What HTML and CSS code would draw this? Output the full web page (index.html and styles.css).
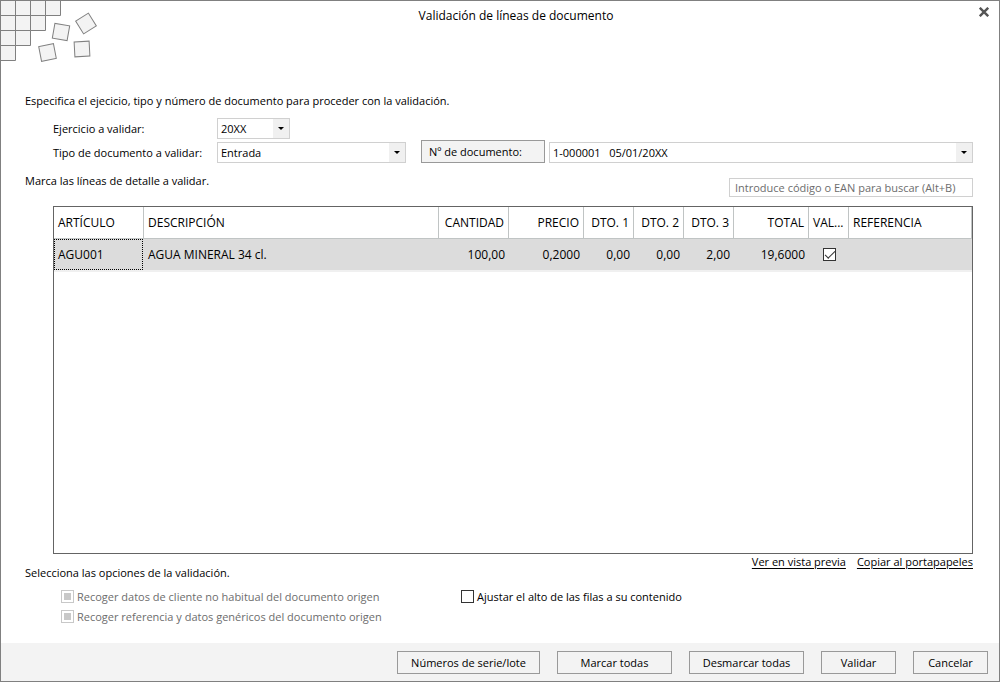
FILE: index.html
```html
<!DOCTYPE html>
<html lang="es">
<head>
<meta charset="utf-8">
<meta name="viewport" content="width=device-width, initial-scale=1">
<title>Validación de líneas de documento</title>
<link rel="stylesheet" href="styles.css">
</head>
<body>
<main class="dialog">
  <header class="titlebar">
    <svg class="mosaic" width="98" height="64" viewBox="0 0 98 64" aria-hidden="true">
      <g fill="#f3f3f3" stroke="#808080">
        <path d="M-.5-.5h60v15h-15v15h-15v15h-15v15h-15z"/>
        <path d="M14.500-.5v45M29.500-.5v30M44.500-.5v15M-.5 14.500h45M-.5 29.500h30M-.5 44.500h15"/>
        <rect x="-7.500" y="-7.500" width="15" height="15" transform="translate(60 31) rotate(10)"/>
        <rect x="-7.500" y="-7.500" width="15" height="15" transform="translate(85 22.500) rotate(-32)"/>
        <rect x="-7.500" y="-7.500" width="15" height="15" transform="translate(46.500 51.500) rotate(-11)"/>
        <rect x="-7.500" y="-7.500" width="15" height="15" transform="translate(81 48) rotate(-3)"/>
      </g>
    </svg>
    <h1 class="title">Validación de líneas de documento</h1>
    <button class="close" type="button" aria-label="Cerrar">
      <svg width="10" height="10" viewBox="0 0 10 10" aria-hidden="true"><path d="M.8 .8l8.400 8.400M9.200 .8l-8.400 8.400" stroke="#555" stroke-width="2.400" fill="none"/></svg>
    </button>
  </header>

  <section class="content">
    <p class="text">Especifica el ejecicio, tipo y número de documento para proceder con la validación.</p>
    <div class="fields">
      <div class="field">
        <label class="field-label" for="ejercicio">Ejercicio a validar:</label>
        <span class="combo combo-year"><select id="ejercicio"><option>20XX</option></select></span>
      </div>
      <div class="field">
        <label class="field-label" for="tipo">Tipo de documento a validar:</label>
        <span class="combo combo-type"><select id="tipo"><option>Entrada</option></select></span>
        <button class="button doc-button" type="button">Nº de documento:</button>
        <span class="combo combo-doc"><select aria-label="Nº de documento"><option>1-000001&nbsp;&nbsp; 05/01/20XX</option></select></span>
      </div>
    </div>

    <div class="lines-head">
      <p class="text">Marca las líneas de detalle a validar.</p>
      <input class="search" type="text" aria-label="Buscar" placeholder="Introduce código o EAN para buscar (Alt+B)">
    </div>

    <div class="grid">
      <table class="lines">
        <colgroup>
          <col class="w-90"><col class="w-295"><col class="w-70"><col class="w-75"><col class="w-50"><col class="w-50"><col class="w-50"><col class="w-75"><col class="w-40"><col>
        </colgroup>
        <thead>
          <tr><th>ARTÍCULO</th><th>DESCRIPCIÓN</th><th class="num">CANTIDAD</th><th class="num">PRECIO</th><th class="num">DTO. 1</th><th class="num">DTO. 2</th><th class="num">DTO. 3</th><th class="num">TOTAL</th><th>VAL...</th><th>REFERENCIA</th></tr>
        </thead>
        <tbody>
          <tr><td class="focused">AGU001</td><td>AGUA MINERAL 34 cl.</td><td class="num">100,00</td><td class="num">0,2000</td><td class="num">0,00</td><td class="num">0,00</td><td class="num">2,00</td><td class="num">19,6000</td><td class="mark"><input class="check" type="checkbox" aria-label="Validar" checked></td><td></td></tr>
        </tbody>
      </table>
    </div>

    <div class="below">
      <p class="text below-text">Selecciona las opciones de la validación.</p>
      <nav class="links"><a href="#preview">Ver en vista previa</a><a href="#copy">Copiar al portapapeles</a></nav>
    </div>

    <div class="options">
      <label class="option disabled"><input class="check" type="checkbox" checked disabled>Recoger datos de cliente no habitual del documento origen</label>
      <label class="option"><input class="check" type="checkbox">Ajustar el alto de las filas a su contenido</label>
      <label class="option disabled"><input class="check" type="checkbox" checked disabled>Recoger referencia y datos genéricos del documento origen</label>
    </div>
  </section>

  <footer class="actions">
    <button class="button size-l" type="button">Números de serie/lote</button>
    <button class="button size-m" type="button">Marcar todas</button>
    <button class="button size-m" type="button">Desmarcar todas</button>
    <button class="button size-s" type="button">Validar</button>
    <button class="button size-s" type="button">Cancelar</button>
  </footer>
</main>
</body>
</html>
```
FILE: styles.css
```css
* { box-sizing: border-box; }
body { margin: 0; background: #fff; color: #000; font: 11px/16px "Segoe UI", "Open Sans", "Noto Sans", sans-serif; }
button, input, select { font: inherit; color: inherit; }
p { margin: 0; }

.dialog { display: flex; flex-direction: column; min-height: 100vh; border: 1px solid #808080; }

.titlebar { display: grid; grid-template-columns: 96px 1fr 64px; align-items: start; height: 92px; }
.mosaic { display: block; }
.title { margin: 0; padding-top: 6px; font-size: 12px; line-height: 18px; font-weight: 400; text-align: center; }
.close { justify-self: end; margin: 6px 10px 0 0; padding: 0; border: 0; background: none; line-height: 0; }

.content { flex: 1; display: flex; flex-direction: column; padding: 0 26px 16px 24px; }

.fields { display: flex; flex-direction: column; gap: 1px; padding: 9px 0 10px 28px; }
.field { display: flex; align-items: flex-end; }
.field-label { width: 164px; line-height: 21px; }
.combo { position: relative; display: block; height: 21px; }
.combo select { appearance: none; display: block; width: 100%; height: 100%; padding: 0 20px 0 3px; border: 1px solid #d0d0d0; border-radius: 0; background: linear-gradient(#f0f0f0, #f0f0f0) right / 16px 100% no-repeat #fff; }
.combo::after { content: ""; position: absolute; right: 6px; top: 9px; border: 3px solid transparent; border-top-color: #000; border-bottom: 0; pointer-events: none; }
.combo-year { width: 73px; }
.combo-type { width: 189px; }
.combo-doc { flex: 1; margin-left: 4px; }

.button { height: 23px; padding: 0; border: 1px solid #999; background: #f3f3f3; }
.doc-button { width: 124px; margin-left: 15px; padding-left: 7px; text-align: left; }

.lines-head { display: flex; justify-content: space-between; align-items: flex-end; }
.lines-head .text { align-self: flex-start; }
.search { width: 244px; height: 19px; margin-top: 5px; padding: 0 5px 1px; border: 1px solid #d0d0d0; }
.search::placeholder { color: #6d6d6d; opacity: 1; }

.grid { flex: 1; margin: 9px 0 0 28px; border: 1px solid #646464; }
.lines { width: 100%; table-layout: fixed; border-collapse: separate; border-spacing: 0; font-size: 12px; white-space: nowrap; }
.w-90 { width: 90px; }
.w-295 { width: 295px; }
.w-70 { width: 70px; }
.w-75 { width: 75px; }
.w-50 { width: 50px; }
.w-40 { width: 40px; }
.lines th { height: 32px; padding: 0 4px; border-right: 1px solid #c0c4c4; border-bottom: 1px solid #c0c4c4; font-weight: 400; text-align: left; }
.lines td { height: 33px; padding: 0 4px; border-bottom: 2px solid #f0f0f0; background: #dcdcdc; }
.lines .num { text-align: right; }
.lines .focused { position: relative; }
.lines .focused::after { content: ""; position: absolute; inset: 0 1px 0 0; border: 1px dotted #000; }
.lines .mark { padding: 0 14px; }

.check { appearance: none; display: grid; place-items: center; flex: none; width: 13px; height: 13px; margin: 0; border: 1px solid #333; background: #fff; }
.mark .check:checked::after { content: ""; width: 9px; height: 4px; margin-bottom: 3px; border: solid #333; border-width: 0 0 1px 1px; transform: rotate(-45deg); }
.check:disabled { border-color: #c8c8c8; }
.check:disabled:checked::after { content: ""; width: 7px; height: 7px; background: #c8c8c8; }

.below { display: flex; justify-content: space-between; align-items: flex-start; }
.below-text { padding-top: 11px; }
.links { display: flex; gap: 11px; }
.links a { color: #000; text-underline-offset: 2px; }

.options { display: grid; grid-template-columns: 400px 1fr; row-gap: 4px; padding: 8px 0 2px 36px; }
.option { display: flex; align-items: flex-start; gap: 3px; }
.option .check { margin-top: 1px; }
.disabled { color: #6d6d6d; }

.actions { display: flex; justify-content: flex-end; gap: 17px; padding: 8px 11px 7px; background: #f3f3f3; }
.size-l { width: 143px; }
.size-m { width: 115px; }
.size-s { width: 75px; }
```
